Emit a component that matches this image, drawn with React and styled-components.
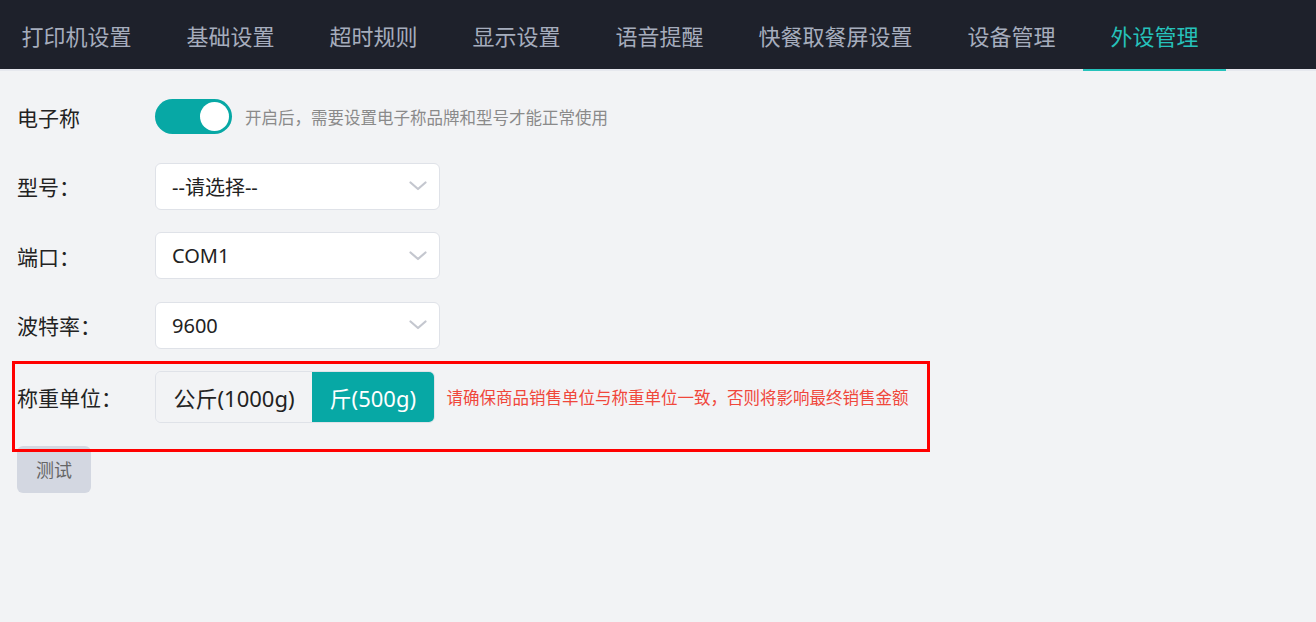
import { useState } from "react";
import styled, { createGlobalStyle } from "styled-components";

const GlobalStyle = createGlobalStyle`
  html, body {
    margin: 0;
    padding: 0;
    background-color: #f2f3f5;
    font-family: "Noto Sans", "Noto Sans CJK SC", sans-serif;
  }
`;

const Page = styled.div`
  min-height: 100vh;
  background-color: #f2f3f5;
`;

const TabBar = styled.nav`
  display: flex;
  height: 69px;
  margin-left: -6px;
  background-color: #1e212b;
  border-bottom: 2px solid #e6e8ee;
`;

const Tab = styled.div`
  position: relative;
  display: flex;
  align-items: center;
  padding: 0 27.5px;
  font-size: 22px;
  color: ${(p) => (p.$active ? "#26c2bb" : "#a6adbd")};
  cursor: pointer;
  white-space: nowrap;

  &::after {
    content: "";
    display: ${(p) => (p.$active ? "block" : "none")};
    position: absolute;
    left: 0;
    right: 0;
    bottom: -2px;
    height: 2px;
    background-color: #26c2bb;
  }
`;

const Content = styled.div`
  display: flex;
  flex-direction: column;
  align-items: flex-start;
  gap: 22.5px;
  padding: 22px 17px;
`;

const Row = styled.div`
  position: relative;
  display: flex;
  align-items: center;
  min-height: 47px;

  ${(p) =>
    p.$marked &&
    `
    &::after {
      content: "";
      position: absolute;
      top: -10px;
      left: -5px;
      width: 918px;
      bottom: -29px;
      border: 3px solid #ff0000;
      box-sizing: border-box;
      pointer-events: none;
    }
  `}
`;

const Label = styled.div`
  width: 138px;
  flex-shrink: 0;
  font-size: 21px;
  color: #222;
`;

const Switch = styled.button`
  position: relative;
  width: 77px;
  height: 35px;
  padding: 0;
  border: none;
  border-radius: 18px;
  background-color: ${(p) => (p.$on ? "#07a8a5" : "#c8ccd4")};
  cursor: pointer;

  &::before {
    content: "";
    position: absolute;
    top: 3px;
    left: ${(p) => (p.$on ? "45px" : "3px")};
    width: 29px;
    height: 29px;
    border-radius: 50%;
    background-color: #fff;
    transition: left 0.2s;
  }
`;

const Hint = styled.span`
  margin-left: ${(p) => (p.$warn ? "12px" : "13px")};
  font-size: 16.5px;
  color: ${(p) => (p.$warn ? "#f0473b" : "#8a8a8a")};
`;

const SelectBox = styled.div`
  display: flex;
  align-items: center;
  justify-content: space-between;
  box-sizing: border-box;
  width: 285px;
  height: 47px;
  padding: 0 12px 0 16px;
  background-color: #fff;
  border: 1px solid #dfe2e8;
  border-radius: 6px;
  font-size: 20px;
  color: #222;
  cursor: pointer;
`;

const Segmented = styled.div`
  display: flex;
  height: 52px;
  box-sizing: border-box;
  border: 1px solid #dfe2e8;
  border-radius: 6px;
  overflow: hidden;
`;

const Segment = styled.div`
  display: flex;
  align-items: center;
  padding: 0 17.5px;
  font-size: 22px;
  color: ${(p) => (p.$active ? "#fff" : "#222")};
  background-color: ${(p) => (p.$active ? "#07a8a5" : "#f2f3f5")};
  cursor: pointer;
`;

const TestButton = styled.button`
  width: 74px;
  height: 47px;
  border: none;
  border-radius: 6px;
  background-color: #d3d7e1;
  font-family: inherit;
  font-size: 18px;
  color: #666;
  cursor: pointer;
`;

const Chevron = () => (
  <svg width="18" height="10" viewBox="0 0 18 10">
    <polyline
      points="1.5,1.5 9,8 16.5,1.5"
      fill="none"
      stroke="#c4c7cf"
      strokeWidth="2.2"
      strokeLinecap="round"
      strokeLinejoin="round"
    />
  </svg>
);

const tabs = [
  "打印机设置",
  "基础设置",
  "超时规则",
  "显示设置",
  "语音提醒",
  "快餐取餐屏设置",
  "设备管理",
  "外设管理",
];

const selects = [
  { label: "型号：", value: "--请选择--" },
  { label: "端口：", value: "COM1" },
  { label: "波特率：", value: "9600" },
];

const App = () => {
  const [activeTab, setActiveTab] = useState(7);
  const [scaleOn, setScaleOn] = useState(true);
  const [unit, setUnit] = useState("jin");

  return (
    <Page>
      <GlobalStyle />
      <TabBar>
        {tabs.map((t, i) => (
          <Tab key={t} $active={i === activeTab} onClick={() => setActiveTab(i)}>
            {t}
          </Tab>
        ))}
      </TabBar>

      <Content>
        <Row>
          <Label>电子称</Label>
          <Switch $on={scaleOn} onClick={() => setScaleOn(!scaleOn)} />
          <Hint>开启后，需要设置电子称品牌和型号才能正常使用</Hint>
        </Row>

        {selects.map((s) => (
          <Row key={s.label}>
            <Label>{s.label}</Label>
            <SelectBox>
              <span>{s.value}</span>
              <Chevron />
            </SelectBox>
          </Row>
        ))}

        <Row $marked>
          <Label>称重单位：</Label>
          <Segmented>
            <Segment $active={unit === "kg"} onClick={() => setUnit("kg")}>
              公斤(1000g)
            </Segment>
            <Segment $active={unit === "jin"} onClick={() => setUnit("jin")}>
              斤(500g)
            </Segment>
          </Segmented>
          <Hint $warn>请确保商品销售单位与称重单位一致，否则将影响最终销售金额</Hint>
        </Row>

        <TestButton>测试</TestButton>
      </Content>
    </Page>
  );
};

export default App;
